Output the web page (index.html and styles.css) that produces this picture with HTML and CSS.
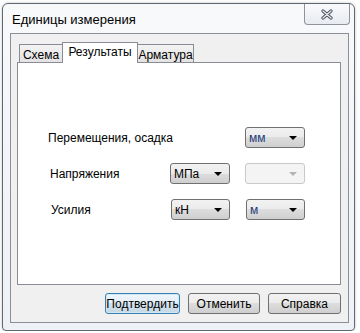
FILE: index.html
```html
<!DOCTYPE html>
<html lang="ru">
<head>
    <meta charset="UTF-8">
    <title>Единицы измерения</title>
    <link rel="stylesheet" href="styles.css">
</head>
<body>
    <div class="window">
        <div class="titlebar">
            <span class="title">Единицы измерения</span>
            <div class="close-btn">
                <svg width="14" height="11" viewBox="0 0 14 11">
                    <path d="M3 2 L11 9 M11 2 L3 9" stroke="#4a4f5a" stroke-width="3.2" stroke-linecap="round"/>
                    <path d="M3 2 L11 9 M11 2 L3 9" stroke="#e4e7ec" stroke-width="1.4" stroke-linecap="round"/>
                </svg>
            </div>
        </div>

        <div class="client">
            <div class="tabs">
                <div class="tab tab-first">Схема</div>
                <div class="tab tab-active">Результаты</div>
                <div class="tab tab-last">Арматура</div>
            </div>

            <div class="tab-panel">
                <div class="units-grid">
                    <div class="label">Перемещения, осадка</div>
                    <div></div>
                    <div class="combo combo-focus"><span>мм</span><i class="arrow"></i></div>

                    <div class="label label-2">Напряжения</div>
                    <div class="combo"><span>МПа</span><i class="arrow"></i></div>
                    <div class="combo combo-disabled"><span></span><i class="arrow"></i></div>

                    <div class="label label-3">Усилия</div>
                    <div class="combo combo-shift"><span>кН</span><i class="arrow"></i></div>
                    <div class="combo combo-focus combo-shift"><span>м</span><i class="arrow"></i></div>
                </div>
            </div>

            <div class="buttons">
                <button class="btn btn-default btn-ok">Подтвердить</button>
                <button class="btn btn-cancel">Отменить</button>
                <button class="btn btn-help">Справка</button>
            </div>
        </div>
    </div>
</body>
</html>
```

FILE: styles.css
```css
body {
    margin: 0;
    background-color: #fff;
    font-family: "Liberation Sans", Arial, sans-serif;
    font-size: 12px;
    color: #000;
}

/* Window frame */
.window {
    margin: 3px 0 0 2px;
    width: 353px;
    height: 328px;
    box-sizing: border-box;
    border: 1px solid #5f6770;
    border-radius: 6px 6px 4px 4px;
    background: linear-gradient(#f7f9fb, #eef1f5);
    box-shadow: 0 0 3px rgba(0, 0, 0, 0.25);
    padding: 0 5px 7px 7px;
    display: flex;
    flex-direction: column;
}

.titlebar {
    height: 29px;
    display: flex;
    justify-content: space-between;
    align-items: flex-start;
}

.title {
    padding: 8px 0 0 2px;
    font-size: 13px;
    color: #000;
}

.close-btn {
    width: 46px;
    height: 21px;
    margin-right: -1px;
    box-sizing: border-box;
    border: 1px solid #8f949b;
    border-top: none;
    border-radius: 0 0 4px 4px;
    background: linear-gradient(#f9fafc, #e8ebf0);
    display: flex;
    justify-content: center;
    align-items: center;
}

/* Client area */
.client {
    flex: 1;
    border: 1px solid #8c8f93;
    background-color: #f0f0f0;
    padding: 8px 7px 8px 6px;
    display: flex;
    flex-direction: column;
}

/* Tabs */
.tabs {
    display: flex;
    align-items: flex-end;
    height: 21px;
    margin-bottom: -1px;
    padding-left: 2px;
}

.tab {
    height: 19px;
    box-sizing: border-box;
    border: 1px solid #898c95;
    border-bottom: none;
    background: linear-gradient(#f3f3f3, #e2e2e2);
    display: flex;
    align-items: center;
    justify-content: center;
    margin-right: -1px;
    padding-top: 1px;
}

.tab-first {
    width: 44px;
}

.tab-active {
    width: 76px;
    height: 21px;
    background: #fff;
    position: relative;
    z-index: 1;
    padding-top: 0;
    padding-bottom: 2px;
}

.tab-last {
    width: 57px;
}

.tab-panel {
    flex: 1;
    background-color: #fff;
    border: 1px solid #898c95;
    padding: 64px 0 0 30px;
}

/* Units grid */
.units-grid {
    display: grid;
    grid-template-columns: 107px 60px 60px;
    grid-auto-rows: 21px;
    column-gap: 15px;
    row-gap: 15px;
    align-items: center;
}

.label {
    white-space: nowrap;
}

.label-2 {
    padding-left: 2px;
}

.label-3 {
    padding-left: 3px;
}

.combo {
    height: 21px;
    box-sizing: border-box;
    border: 1px solid #707070;
    border-radius: 3px;
    background: linear-gradient(#f2f2f2 0%, #ebebeb 50%, #dddddd 50%, #cfcfcf 100%);
    display: flex;
    align-items: center;
    justify-content: space-between;
    padding: 0 7px 0 3px;
}

.combo-focus span {
    color: #1f3a7a;
}

.combo-shift {
    margin-left: 1px;
}

.arrow {
    width: 0;
    height: 0;
    border-left: 4px solid transparent;
    border-right: 4px solid transparent;
    border-top: 4px solid #000;
}

.combo-disabled {
    border-color: #c9c9c9;
    background: #f4f4f4;
}

.combo-disabled .arrow {
    border-top-color: #b4b4b4;
}

/* Dialog buttons */
.buttons {
    display: flex;
    justify-content: flex-end;
    gap: 8px;
    margin-top: 8px;
}

.btn {
    height: 21px;
    box-sizing: border-box;
    border: 1px solid #707070;
    border-radius: 3px;
    background: linear-gradient(#f2f2f2 0%, #ebebeb 50%, #dddddd 50%, #cfcfcf 100%);
    font-family: "Liberation Sans", Arial, sans-serif;
    font-size: 12px;
    color: #000;
    padding: 0;
}

.btn-default {
    border-color: #3c7fb1;
    box-shadow: inset 0 0 0 1px #cfe8f8;
    background: linear-gradient(#eef6fb 0%, #e3eef6 50%, #d3e3ee 50%, #c6d8e5 100%);
}

.btn-ok {
    width: 75px;
}

.btn-cancel {
    width: 72px;
}

.btn-help {
    width: 73px;
}
```
